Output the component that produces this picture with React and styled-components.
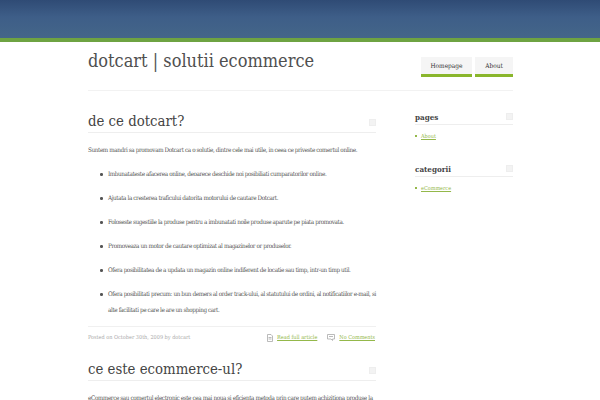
import React from 'react';
import styled, { createGlobalStyle } from 'styled-components';

const Global = createGlobalStyle`
  html, body { margin: 0; padding: 0; background: #fff; overflow: hidden; height: 400px; }
  body { font-family: "DejaVu Serif Condensed", "DejaVu Serif", serif; color: #555; }
`;

const TopBar = styled.div`
  height: 38px;
  background: linear-gradient(to bottom, #2f4b75 0%, #3e5e88 45%, #446689 100%);
  border-bottom: 4px solid #6ea342;
`;

const Wrap = styled.div`
  width: 425px;
  margin-left: 88px;
`;

const Masthead = styled.div`
  height: 48px;
  display: flex;
  justify-content: space-between;
  border-bottom: 1px solid #f2f2f2;
`;

const SiteTitle = styled.h1`
  margin: 7px 0 0;
  font-size: 18px;
  line-height: 24px;
  font-weight: 400;
  color: #505050;
`;

const Nav = styled.div`
  display: flex;
  gap: 3px;
  margin-top: 15px;
`;

const NavItem = styled.a`
  height: 20px;
  width: ${p => p.$w}px;
  box-sizing: border-box;
  display: flex;
  align-items: center;
  justify-content: center;
  background: #f5f5f5;
  border-bottom: 3px solid #8ab62c;
  font-size: 6.5px;
  color: #333;
`;

const Columns = styled.div`
  display: flex;
  justify-content: space-between;
`;

const Main = styled.div`
  width: 288px;
  padding-top: 19px;
`;

const PostTitle = styled.h2`
  margin: 0;
  height: 22px;
  font-size: 14.8px;
  line-height: 21px;
  font-weight: 400;
  color: #444;
  border-bottom: 1px solid #eee;
  display: flex;
  justify-content: space-between;
`;

const Mark = styled.span`
  width: 7px;
  height: 7px;
  margin-top: ${p => p.$top}px;
  background: #f3f3f3;
  border: 1px solid #eee;
  box-sizing: border-box;
`;

const Para = styled.p`
  margin: 12px 0 0;
  font-size: 6.3px;
  line-height: 10px;
  letter-spacing: -0.39px;
  color: #555;
  white-space: nowrap;
`;

const List = styled.ul`
  margin: 11px 0 0;
  padding: 0 0 0 12px;
  list-style: none;
  font-size: 6.3px;
  letter-spacing: -0.39px;
  color: #555;
`;

const Item = styled.li`
  display: flex;
  gap: 5.5px;
  line-height: 16px;
  margin-bottom: 8px;
  &::before {
    content: "";
    flex: none;
    width: 2.5px;
    height: 2.5px;
    margin-top: 7px;
    border-radius: 50%;
    background: #555;
  }
`;

const Meta = styled.div`
  border-top: 1px solid #f0f0f0;
  margin-top: 5px;
  padding: 6px 1px 0 0;
  height: 25px;
  display: flex;
  justify-content: space-between;
  font-size: 5.5px;
  line-height: 9px;
  color: #aaa;
`;

const MetaLinks = styled.div`
  display: flex;
  align-items: flex-start;
`;

const IconLink = styled.a`
  display: flex;
  align-items: center;
  gap: 4px;
  margin-left: 10px;
  color: #94b84a;
  text-decoration: underline;
`;

const Sidebar = styled.div`
  width: 98px;
  padding-top: 19px;
`;

const Widget = styled.div`
  margin-bottom: 21px;
`;

const WidgetTitle = styled.h3`
  margin: 0;
  height: 14px;
  font-size: 8px;
  line-height: 14px;
  font-weight: 700;
  color: #444;
  border-bottom: 1px solid #eee;
  display: flex;
  justify-content: space-between;
`;

const WidgetItem = styled.div`
  margin-top: 6px;
  display: flex;
  align-items: center;
  gap: 4px;
  font-size: 5.5px;
  line-height: 10px;
  color: #94b84a;
  text-decoration: underline;
  &::before {
    content: "";
    width: 2px;
    height: 2px;
    background: #94b84a;
  }
`;

const PageIcon = () => (
  <svg width="6" height="8" viewBox="0 0 6 8" fill="none" stroke="#aaa" strokeWidth="0.8">
    <path d="M.5.5h3.500l1.500 1.500v5.500h-5zM1.500 3.500h3M1.500 5h3" />
  </svg>
);

const CommentIcon = () => (
  <svg width="8" height="7" viewBox="0 0 8 7" fill="none" stroke="#aaa" strokeWidth="0.8">
    <path d="M.5.500h7v4.500h-2v1.500l-1.500-1.500h-3.500zM2 2.500h4" />
  </svg>
);

const bullets = [
  'Imbunatateste afacerea online, deoarece deschide noi posibiliati cumparatorilor online.',
  'Ajutata la cresterea traficului datorita motorului de cautare Dotcart.',
  'Foloseste sugestiile la produse pentru a imbunatati noile produse aparute pe piata promovata.',
  'Promoveaza un motor de cautare optimizat al magazinelor or produselor.',
  'Ofera posibilitatea de a updata un magazin online indiferent de locatie sau timp, intr-un timp util.',
  'Ofera posibilitati precum: un bun demers al order track-ului, al statutului de ordini, al notificatiilor e-mail, si alte facilitati pe care le are un shopping cart.',
];

export default function App() {
  return (
    <>
      <Global />
      <TopBar />
      <Wrap>
        <Masthead>
          <SiteTitle>dotcart | solutii ecommerce</SiteTitle>
          <Nav>
            <NavItem $w={51}>Homepage</NavItem>
            <NavItem $w={38}>About</NavItem>
          </Nav>
        </Masthead>
        <Columns>
          <Main>
            <PostTitle>de ce dotcart?<Mark $top={9} /></PostTitle>
            <Para>Suntem mandri sa promovam Dotcart ca o solutie, dintre cele mai utile, in ceea ce priveste comertul online.</Para>
            <List>
              {bullets.map(b => <Item key={b}>{b}</Item>)}
            </List>
            <Meta>
              <span>Posted on October 30th, 2009 by dotcart</span>
              <MetaLinks>
                <IconLink><PageIcon />Read full article</IconLink>
                <IconLink><CommentIcon />No Comments</IconLink>
              </MetaLinks>
            </Meta>
            <PostTitle>ce este ecommerce-ul?<Mark $top={9} /></PostTitle>
            <Para>eCommerce sau comertul electronic este cea mai noua si eficienta metoda prin care putem achizitiona produse la</Para>
          </Main>
          <Sidebar>
            <Widget>
              <WidgetTitle>pages<Mark $top={3} /></WidgetTitle>
              <WidgetItem>About</WidgetItem>
            </Widget>
            <Widget>
              <WidgetTitle>categorii<Mark $top={3} /></WidgetTitle>
              <WidgetItem>eCommerce</WidgetItem>
            </Widget>
          </Sidebar>
        </Columns>
      </Wrap>
    </>
  );
}
